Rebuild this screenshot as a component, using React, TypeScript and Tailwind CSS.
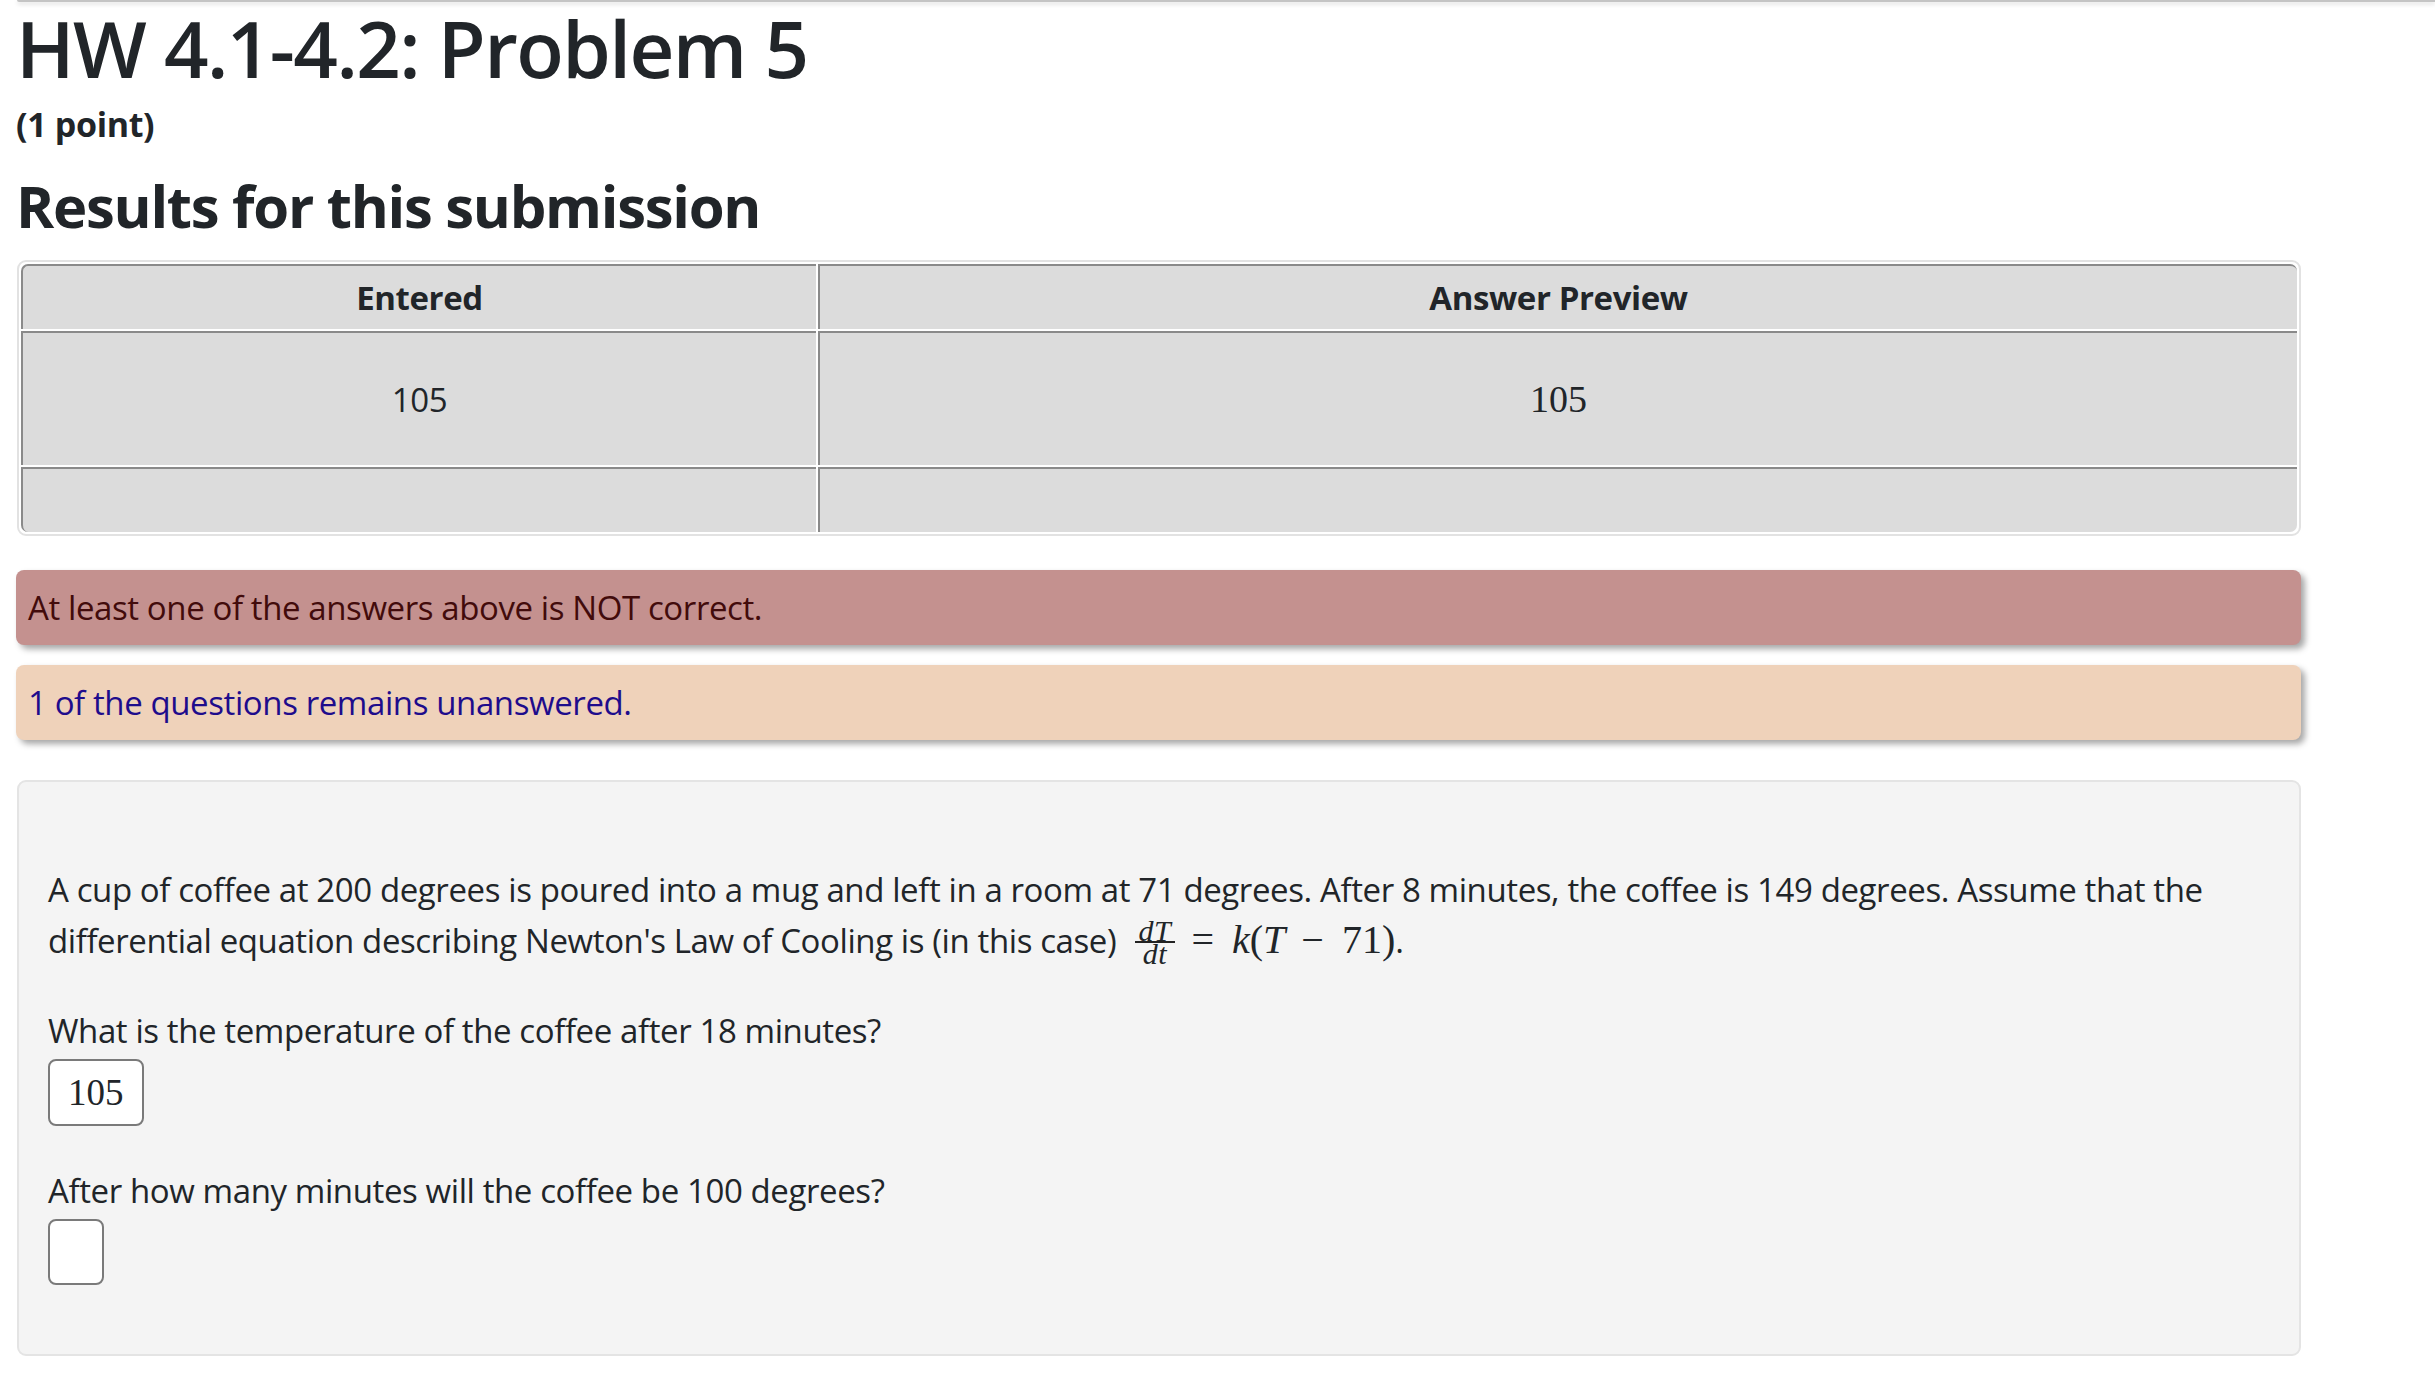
import React from "react";

function Frac() {
  return (
    <span className="inline-flex flex-col items-center align-[12px] ml-[10px] font-['Liberation_Serif',serif] italic text-[30px] leading-[21px] tracking-[0.02em]">
      <span className="px-[4px]">dT</span>
      <span className="px-[4px] border-t-2 border-[#222] w-full text-center">dt</span>
    </span>
  );
}

export default function App() {
  return (
    <div className="relative min-h-screen bg-white text-[#212529] font-['Open_Sans',sans-serif] tracking-[-0.025em]">
      <div className="absolute top-0 left-[17px] right-0 h-[2px] bg-[#c4c4c4] rounded-bl-[4px] shadow-[0_2px_4px_rgba(0,0,0,0.18)]" />
      <div className="pl-[16px] w-[2301px] flex flex-col">
        <h1 className="text-[78px] leading-[96px] font-semibold tracking-[-0.02em]">HW 4.1-4.2: Problem 5</h1>
        <div className="mt-[6px] text-[34px] leading-[44px] font-bold tracking-[-0.01em]">(1 point)</div>
        <h2 className="mt-[24px] text-[58px] leading-[72px] font-bold tracking-[-0.022em]">Results for this submission</h2>

        <div className="mt-[18px] ml-[1px] border-2 border-[#e2e2e2] rounded-[9px] p-[2px] grid grid-cols-[795px_1fr] gap-[2px] text-[33px] leading-[51px]">
          <div className="h-[65px] bg-[#dcdcdc] border-t-2 border-l-2 border-[#8a8a8a] rounded-tl-[7px] flex items-center justify-center font-bold">Entered</div>
          <div className="h-[65px] bg-[#dcdcdc] border-t-2 border-l-2 border-[#8a8a8a] rounded-tr-[7px] flex items-center justify-center font-bold">Answer Preview</div>
          <div className="h-[134px] bg-[#dcdcdc] border-t-2 border-l-2 border-[#8a8a8a] flex items-center justify-center">105</div>
          <div className="h-[134px] bg-[#dcdcdc] border-t-2 border-l-2 border-[#8a8a8a] flex items-center justify-center font-['Liberation_Serif',serif] text-[38px] tracking-normal">105</div>
          <div className="h-[65px] bg-[#dcdcdc] border-t-2 border-l-2 border-[#8a8a8a] rounded-bl-[7px]" />
          <div className="h-[65px] bg-[#dcdcdc] border-t-2 border-l-2 border-[#8a8a8a] rounded-br-[7px]" />
        </div>

        <div className="mt-[34px] bg-[#c4918f] text-[#420b0b] rounded-[8px] px-[12px] py-[12px] text-[33px] leading-[51px] shadow-[4px_4px_6px_rgba(0,0,0,0.35)]">
          At least one of the answers above is NOT correct.
        </div>
        <div className="mt-[20px] bg-[#efd2ba] text-[#1e0c8c] rounded-[8px] px-[12px] py-[12px] text-[33px] leading-[51px] shadow-[4px_4px_6px_rgba(0,0,0,0.35)]">
          1 of the questions remains unanswered.
        </div>

        <div className="mt-[40px] ml-[1px] bg-[#f4f4f4] border-2 border-[#e4e4e4] rounded-[9px] pl-[29px] pr-[30px] pt-[82px] pb-[69px] text-[33px] leading-[51px]">
          <p>
            A cup of coffee at 200 degrees is poured into a mug and left in a room at 71 degrees. After 8 minutes, the coffee is 149 degrees. Assume that the differential equation describing Newton's Law of Cooling is (in this case)
            {" "}
            <Frac />
            <span className="font-['Liberation_Serif',serif] text-[40px] leading-[48px] tracking-normal">
              <span className="ml-[16px]">=</span>
              <span className="ml-[18px] italic">k</span>
              <span>(</span>
              <span className="italic">T</span>
              <span className="ml-[16px] mr-[18px]">−</span>
              <span>71</span>
              <span>)</span>
            </span>
            .
          </p>
          <p className="mt-[39px]">What is the temperature of the coffee after 18 minutes?</p>
          <div className="mt-[3px] w-[96px] h-[67px] bg-white border-2 border-[#7a7a7a] rounded-[8px] flex items-center pl-[18px] font-['Liberation_Serif',serif] text-[37px] tracking-normal">
            105
          </div>
          <p className="mt-[39px]">After how many minutes will the coffee be 100 degrees?</p>
          <div className="mt-[3px] w-[56px] h-[66px] bg-white border-2 border-[#7a7a7a] rounded-[8px]" />
        </div>
      </div>
    </div>
  );
}
